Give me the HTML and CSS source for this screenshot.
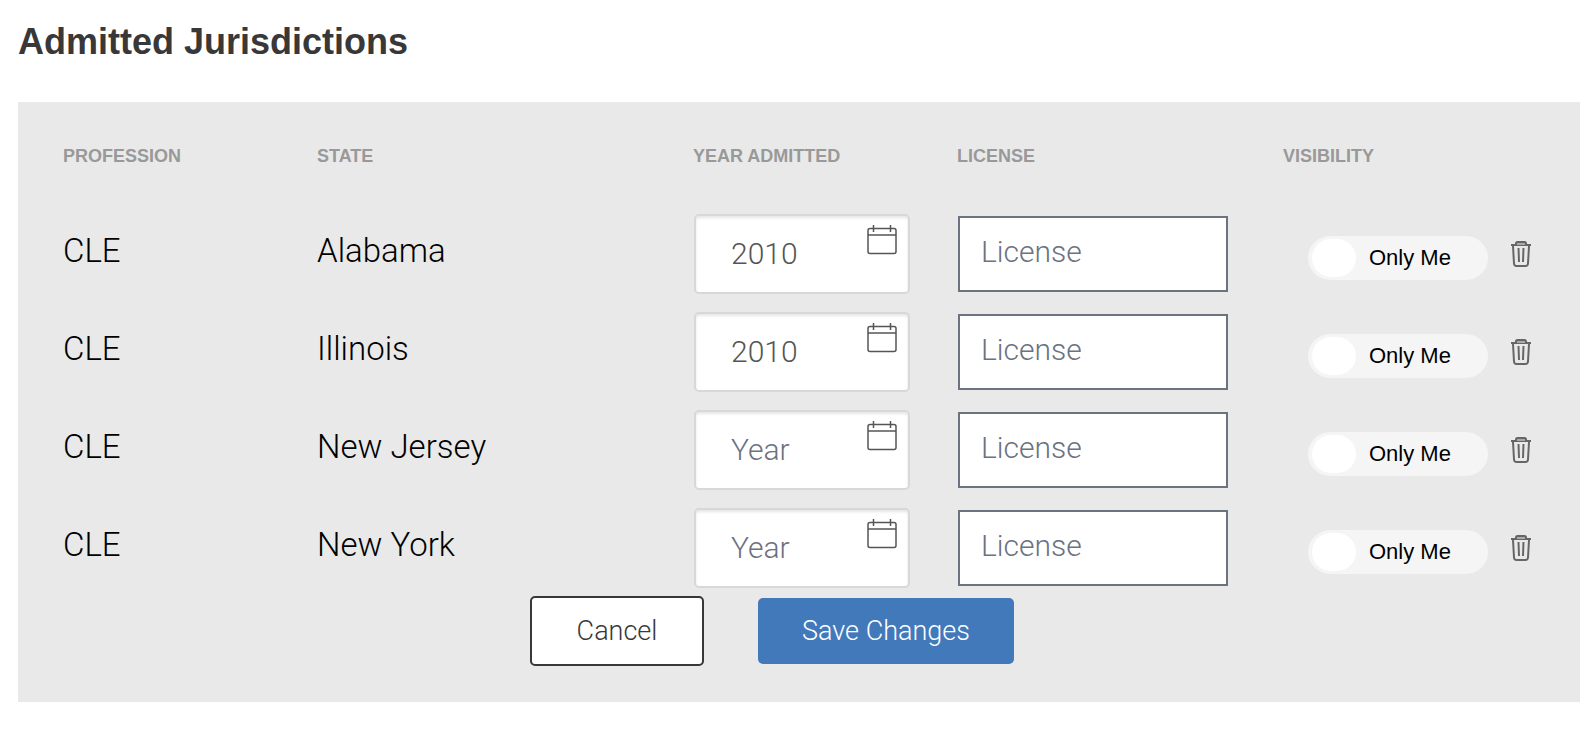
FILE: index.html
```
<!DOCTYPE html>
<html lang="en">
  <head>
    <meta charset="UTF-8" />
    <meta name="viewport" content="width=device-width, initial-scale=1.0" />
    <title>Admitted Jurisdictions</title>
    <link rel="stylesheet" href="styles.css">
  </head>
  <body>
    <svg class="sprite" aria-hidden="true">
      <symbol id="calendar" viewBox="0 0 32 32">
        <rect x="2" y="4.5" width="28" height="25" rx="2" />
        <path d="M2 11H30M7.5 1V8M24.5 1V8" />
      </symbol>
      <symbol id="trash" viewBox="0 0 22 28">
        <path d="M1 5H21" />
        <path class="handle" d="M6 5V3.5Q6 2 7.500 2H14.500Q16 2 16 3.500V5" />
        <path d="M3 6L4 23.500Q4.200 26 6.500 26H15.500Q17.800 26 18 23.500L19 6M8.500 8L9 22M13.500 8L13 22" />
      </symbol>
    </svg>

    <h1 class="title">Admitted Jurisdictions</h1>
    <form class="panel">
      <table class="jurisdictions">
        <colgroup>
          <col class="col-profession">
          <col>
          <col class="col-year">
          <col class="col-license">
          <col class="col-visibility">
        </colgroup>
        <thead>
          <tr>
            <th scope="col">Profession</th>
            <th scope="col">State</th>
            <th scope="col">Year Admitted</th>
            <th scope="col">License</th>
            <th scope="col">Visibility</th>
          </tr>
        </thead>
        <tbody>
          <tr>
            <td class="text-cell">CLE</td>
            <td class="text-cell">Alabama</td>
            <td>
              <div class="year">
                <input class="year__input" type="text" placeholder="Year" value="2010" aria-label="Year admitted, Alabama">
                <button class="year__button" type="button" aria-label="Pick year"><svg class="calendar-icon"><use href="#calendar" /></svg></button>
              </div>
            </td>
            <td><input class="license" type="text" placeholder="License" aria-label="License, Alabama"></td>
            <td>
              <div class="visibility">
                <label class="toggle"><input class="toggle__knob" type="checkbox">Only Me</label>
                <button class="delete" type="button" aria-label="Delete Alabama"><svg class="trash-icon"><use href="#trash" /></svg></button>
              </div>
            </td>
          </tr>
          <tr>
            <td class="text-cell">CLE</td>
            <td class="text-cell">Illinois</td>
            <td>
              <div class="year">
                <input class="year__input" type="text" placeholder="Year" value="2010" aria-label="Year admitted, Illinois">
                <button class="year__button" type="button" aria-label="Pick year"><svg class="calendar-icon"><use href="#calendar" /></svg></button>
              </div>
            </td>
            <td><input class="license" type="text" placeholder="License" aria-label="License, Illinois"></td>
            <td>
              <div class="visibility">
                <label class="toggle"><input class="toggle__knob" type="checkbox">Only Me</label>
                <button class="delete" type="button" aria-label="Delete Illinois"><svg class="trash-icon"><use href="#trash" /></svg></button>
              </div>
            </td>
          </tr>
          <tr>
            <td class="text-cell">CLE</td>
            <td class="text-cell">New Jersey</td>
            <td>
              <div class="year">
                <input class="year__input" type="text" placeholder="Year" aria-label="Year admitted, New Jersey">
                <button class="year__button" type="button" aria-label="Pick year"><svg class="calendar-icon"><use href="#calendar" /></svg></button>
              </div>
            </td>
            <td><input class="license" type="text" placeholder="License" aria-label="License, New Jersey"></td>
            <td>
              <div class="visibility">
                <label class="toggle"><input class="toggle__knob" type="checkbox">Only Me</label>
                <button class="delete" type="button" aria-label="Delete New Jersey"><svg class="trash-icon"><use href="#trash" /></svg></button>
              </div>
            </td>
          </tr>
          <tr>
            <td class="text-cell">CLE</td>
            <td class="text-cell">New York</td>
            <td>
              <div class="year">
                <input class="year__input" type="text" placeholder="Year" aria-label="Year admitted, New York">
                <button class="year__button" type="button" aria-label="Pick year"><svg class="calendar-icon"><use href="#calendar" /></svg></button>
              </div>
            </td>
            <td><input class="license" type="text" placeholder="License" aria-label="License, New York"></td>
            <td>
              <div class="visibility">
                <label class="toggle"><input class="toggle__knob" type="checkbox">Only Me</label>
                <button class="delete" type="button" aria-label="Delete New York"><svg class="trash-icon"><use href="#trash" /></svg></button>
              </div>
            </td>
          </tr>
        </tbody>
      </table>
      <div class="actions">
        <button class="button button--cancel" type="button">Cancel</button>
        <button class="button button--save" type="submit">Save Changes</button>
      </div>
    </form>
  </body>
</html>
```
FILE: styles.css
```
* {
  box-sizing: border-box;
}
body {
  margin: 0;
  padding: 20px 14px 28px 18px;
  background-color: #fff;
  color: #000;
  font-family: "Liberation Sans", Arial, sans-serif;
}
input,
button {
  margin: 0;
  font-family: Roboto, sans-serif;
  font-weight: 300;
}
button {
  cursor: pointer;
}
.sprite {
  position: absolute;
  width: 0;
  height: 0;
}
.title {
  margin: 0 0 38px;
  color: #383838;
  font-size: 36px;
  line-height: 44px;
}
.panel {
  padding: 0 45px 36px;
  background-color: #e9e9e9;
}
.jurisdictions {
  width: 100%;
  table-layout: fixed;
  border-collapse: collapse;
}
.col-profession {
  width: 254px;
}
.col-year {
  width: 264px;
}
.col-license {
  width: 326px;
}
.col-visibility {
  width: 252px;
}
th {
  padding: 44px 0 39px;
  color: #999;
  font-size: 18px;
  line-height: 20px;
  text-align: left;
  text-transform: uppercase;
}
td {
  height: 98px;
  padding: 0;
  vertical-align: middle;
}
.text-cell {
  padding-bottom: 8px;
  font-family: Roboto, sans-serif;
  font-size: 33px;
  font-weight: 300;
}
.year {
  position: relative;
  width: 216px;
  margin-left: 1px;
}
.year__input {
  display: block;
  width: 100%;
  height: 80px;
  padding: 0 56px 2px 35px;
  border: 2px solid #d8d8d8;
  border-radius: 5px;
  background-color: #fff;
  box-shadow: inset 0 2px 3px rgba(0, 0, 0, 0.1);
  color: #555;
  font-size: 30px;
}
.year__button {
  position: absolute;
  top: 10px;
  right: 12px;
  width: 32px;
  height: 32px;
  padding: 0;
  border: 0;
  background: none;
}
.calendar-icon {
  display: block;
  width: 32px;
  height: 32px;
  fill: none;
  stroke: #555;
  stroke-width: 1.5;
}
.license {
  display: block;
  width: 270px;
  height: 76px;
  margin-left: 1px;
  padding: 0 21px 6px;
  border: 2px solid #6b7280;
  background-color: #fff;
  font-size: 30px;
}
.year__input::placeholder,
.license::placeholder {
  color: #6b7280;
  opacity: 1;
}
.visibility {
  display: flex;
  align-items: center;
  gap: 22px;
  padding-left: 25px;
}
.toggle {
  display: flex;
  align-items: center;
  gap: 13px;
  width: 180px;
  height: 44px;
  margin-top: 8px;
  padding-left: 4px;
  border-radius: 22px;
  background-color: #f5f5f5;
  font-size: 22px;
  cursor: pointer;
}
.toggle__knob {
  width: 44px;
  height: 38px;
  border-radius: 20px;
  background-color: #fff;
  appearance: none;
}
.delete {
  padding: 0;
  border: 0;
  background: none;
}
.trash-icon {
  display: block;
  width: 22px;
  height: 28px;
  fill: none;
  stroke: #666;
  stroke-width: 2;
}
.handle {
  fill: #aaa;
}
.actions {
  display: flex;
  align-items: center;
  justify-content: center;
  gap: 54px;
  margin-top: -1px;
  padding-right: 54px;
}
.button {
  border-radius: 5px;
  font-size: 27px;
}
.button--cancel {
  width: 174px;
  height: 70px;
  border: 2px solid #383838;
  background-color: #fff;
  color: #383838;
}
.button--save {
  width: 256px;
  height: 66px;
  border: 0;
  background-color: #4279bb;
  color: #fff;
}
```
